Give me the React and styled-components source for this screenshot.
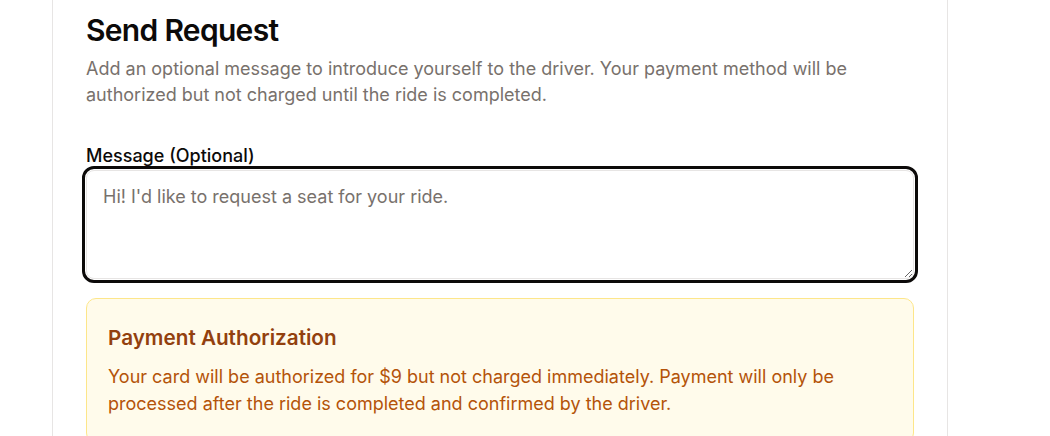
import React from 'react'
import styled, { createGlobalStyle } from 'styled-components';

const GlobalStyle = createGlobalStyle`
    html, body {
        margin: 0;
        padding: 0;
        background: #ffffff;
        font-family: Inter, "Noto Sans", sans-serif;
        -webkit-font-smoothing: antialiased;
    }
    *{
        box-sizing: border-box;
    }
`;

function App() {
    return (
        <>
        <GlobalStyle />
        <PanelStyled>
            <header className="head">
                <h1>Send Request</h1>
                <p>
                    Add an optional message to introduce yourself to the driver. Your payment method will be authorized but not charged until the ride is completed.
                </p>
            </header>

            <Field>
                <label htmlFor="message">Message (Optional)</label>
                <MessageBox
                    id="message"
                    autoFocus
                    placeholder="Hi! I'd like to request a seat for your ride."
                />
            </Field>

            <Notice>
                <h3>Payment Authorization</h3>
                <p>
                    Your card will be authorized for $9 but not charged immediately. Payment will only be processed after the ride is completed and confirmed by the driver.
                </p>
            </Notice>
        </PanelStyled>
        </>
    )
}

const PanelStyled = styled.main`
    margin-left: 52px;
    width: 896px;
    height: 436px;
    overflow: hidden;
    border-left: 1px solid #e7e5e4;
    border-right: 1px solid #e7e5e4;
    padding: 12px 33px 0;
    display: flex;
    flex-direction: column;

    .head{
        h1{
            margin: 0;
            font-size: 30px;
            line-height: 36px;
            font-weight: 600;
            letter-spacing: -0.7px;
            color: #0c0a09;
        }
        p{
            margin: 8px 0 0;
            font-size: 18px;
            line-height: 26px;
            color: #78716c;
        }
    }
`;

const Field = styled.div`
    display: flex;
    flex-direction: column;
    margin-top: 36px;

    label{
        font-size: 18px;
        line-height: 24px;
        font-weight: 500;
        color: #0c0a09;
        margin-bottom: 2px;
    }
`;

const MessageBox = styled.textarea`
    width: 100%;
    height: 109px;
    flex-shrink: 0;
    padding: 13px 16px;
    border: 1px solid #e7e5e4;
    border-radius: 8px;
    outline: 3px solid #0c0a09;
    outline-offset: 1px;
    font-family: Inter, "Noto Sans", sans-serif;
    font-size: 18px;
    line-height: 26px;
    color: #0c0a09;
    caret-color: #0c0a09;
    background: #ffffff;

    &::placeholder{
        color: #78716c;
    }
`;

const Notice = styled.section`
    margin-top: 19px;
    flex-shrink: 0;
    background: #fffbeb;
    border: 1px solid #fde68a;
    border-radius: 10px;
    padding: 25px 21px;

    h3{
        margin: 0;
        font-size: 20.7px;
        line-height: 28px;
        font-weight: 600;
        color: #92400e;
    }
    p{
        margin: 11px 0 0;
        font-size: 18px;
        line-height: 27px;
        color: #b45309;
    }
`;

export default App;
